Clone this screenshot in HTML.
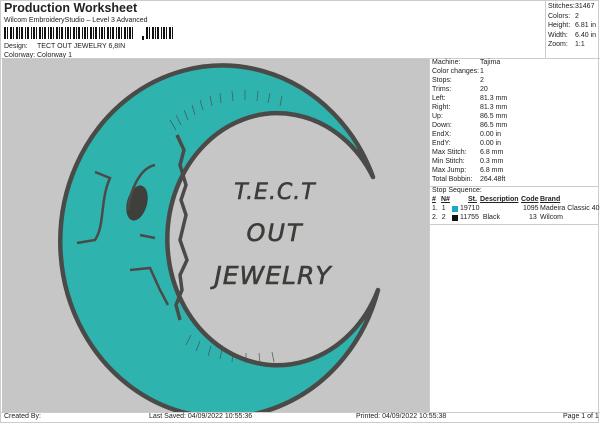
<!DOCTYPE html>
<html><head><style>
body{margin:0;width:600px;height:424px;background:#fff;font-family:"Liberation Sans",sans-serif;color:#222;position:relative;overflow:hidden}
.a{position:absolute;white-space:nowrap;font-size:7px}
.row{position:absolute;left:432px;font-size:7px;white-space:nowrap}
.row b{font-weight:normal;display:inline-block;width:48px}
</style></head><body>
<div style="position:absolute;left:0;top:0;width:599px;height:423px;border:1px solid #ccc;box-sizing:border-box"></div>
<div class="a" style="left:4px;top:1px;font-size:12.5px;font-weight:bold">Production Worksheet</div>
<div class="a" style="left:4px;top:17px">Wilcom EmbroideryStudio – Level 3 Advanced</div>
<svg style="position:absolute;left:4px;top:27px" width="172" height="14">
<g fill="#111">
<rect x="0" y="0" width="2" height="12"/><rect x="3" y="0" width="1" height="12"/><rect x="6" y="0" width="2" height="12"/><rect x="9" y="0" width="1" height="12"/><rect x="12" y="0" width="2" height="12"/><rect x="15" y="0" width="1" height="12"/><rect x="17" y="0" width="2" height="12"/><rect x="21" y="0" width="1" height="12"/><rect x="23" y="0" width="2" height="12"/><rect x="27" y="0" width="1" height="12"/><rect x="29" y="0" width="2" height="12"/><rect x="32" y="0" width="1" height="12"/><rect x="35" y="0" width="2" height="12"/><rect x="38" y="0" width="1" height="12"/><rect x="40" y="0" width="2" height="12"/><rect x="44" y="0" width="1" height="12"/><rect x="46" y="0" width="2" height="12"/><rect x="49" y="0" width="1" height="12"/><rect x="52" y="0" width="2" height="12"/><rect x="55" y="0" width="1" height="12"/><rect x="57" y="0" width="2" height="12"/><rect x="61" y="0" width="1" height="12"/><rect x="63" y="0" width="2" height="12"/><rect x="66" y="0" width="1" height="12"/><rect x="69" y="0" width="2" height="12"/><rect x="72" y="0" width="1" height="12"/><rect x="74" y="0" width="2" height="12"/><rect x="78" y="0" width="1" height="12"/><rect x="80" y="0" width="2" height="12"/><rect x="83" y="0" width="1" height="12"/><rect x="86" y="0" width="2" height="12"/><rect x="89" y="0" width="1" height="12"/><rect x="91" y="0" width="2" height="12"/><rect x="95" y="0" width="1" height="12"/><rect x="97" y="0" width="2" height="12"/><rect x="100" y="0" width="1" height="12"/><rect x="103" y="0" width="2" height="12"/><rect x="106" y="0" width="1" height="12"/><rect x="108" y="0" width="2" height="12"/><rect x="112" y="0" width="1" height="12"/><rect x="114" y="0" width="2" height="12"/><rect x="117" y="0" width="1" height="12"/><rect x="120" y="0" width="2" height="12"/><rect x="123" y="0" width="1" height="12"/><rect x="125" y="0" width="2" height="12"/><rect x="128" y="0" width="1" height="12"/>
<rect x="138" y="9" width="2" height="4"/>
<rect x="142" y="0" width="2" height="12"/><rect x="145" y="0" width="1" height="12"/><rect x="148" y="0" width="2" height="12"/><rect x="151" y="0" width="1" height="12"/><rect x="153" y="0" width="2" height="12"/><rect x="157" y="0" width="1" height="12"/><rect x="159" y="0" width="2" height="12"/><rect x="162" y="0" width="1" height="12"/><rect x="165" y="0" width="2" height="12"/><rect x="168" y="0" width="1" height="12"/>
</g></svg>
<div class="a" style="left:4px;top:43px">Design:</div><div class="a" style="left:37px;top:43px">TECT OUT JEWELRY 6,8IN</div>
<div class="a" style="left:4px;top:52px">Colorway:</div><div class="a" style="left:37px;top:52px">Colorway 1</div>
<div style="position:absolute;left:545px;top:0;width:53px;height:58px;border-left:1px solid #ccc"></div>
<div class="a" style="left:548px;top:2px;line-height:9.5px">Stitches:<br>Colors:<br>Height:<br>Width:<br>Zoom:</div>
<div class="a" style="left:575px;top:2px;line-height:9.5px">31467<br>2<br>6.81 in<br>6.40 in<br>1:1</div>
<div style="position:absolute;left:0;top:58px;width:600px;border-top:1px solid #ccc"></div>
<div style="position:absolute;left:2px;top:59px;width:427px;height:353px;background:#c6c6c6;overflow:hidden">
<svg width="427" height="353" viewBox="2 59 427 353">
<path d="M373,177 A162 176 0 1 0 378,290 A110 126 0 1 1 373,177 Z" fill="#2fb3ae" stroke="#4a4b48" stroke-width="4.5" stroke-linejoin="round"/>
<g stroke="#4a4b48" stroke-width="0.8" opacity="0.8">
<path d="M170,120 l6,10 M176,115 l5,10 M184,110 l4,10 M192,105 l3,10 M200,100 l3,10 M210,96 l2,10 M220,93 l1,10 M232,91 l1,10 M245,90 l0,10 M258,91 l-1,10 M270,93 l-2,10 M282,96 l-2,10"/>
<path d="M186,345 l5,-10 M196,351 l4,-10 M208,356 l3,-10 M220,359 l2,-10 M232,362 l1,-10 M246,363 l0,-10 M260,363 l-1,-10 M274,362 l-2,-10"/>
</g>
<path d="M177,135 L184,150 L180,165 L186,185 L181,200 L186,215 L180,240 L187,260 L180,275 L182,290 L176,305 L180,320" fill="none" stroke="#4a4b48" stroke-width="3.5"/>
<ellipse cx="137" cy="203" rx="10" ry="18" fill="#3f3f3c" transform="rotate(15 137 203)"/>
<path d="M155,165 C140,168 130,190 128,210 M95,172 L110,178 C100,200 105,225 95,240 L77,243 M130,270 L150,268 L160,290 L168,305 M140,235 L155,238" fill="none" stroke="#4a4b48" stroke-width="2.5"/>
<g fill="#3c3c39" font-family="DejaVu Sans,sans-serif" font-style="italic" text-anchor="middle" stroke="#3c3c39" stroke-width="0.6">
<text x="275" y="199" font-size="22" letter-spacing="1">T.E.C.T</text>
<text x="275" y="241" font-size="24" letter-spacing="2">OUT</text>
<text x="273" y="284" font-size="25" letter-spacing="1">JEWELRY</text>
</g>
</svg></div>
<div style="position:absolute;left:429px;top:59px;width:1px;height:353px;background:#ccc"></div>
<div class="row" style="top:58px;line-height:9px"><b>Machine:</b>Tajima<br><b>Color changes:</b>1<br><b>Stops:</b>2<br><b>Trims:</b>20<br><b>Left:</b>81.3 mm<br><b>Right:</b>81.3 mm<br><b>Up:</b>86.5 mm<br><b>Down:</b>86.5 mm<br><b>EndX:</b>0.00 in<br><b>EndY:</b>0.00 in<br><b>Max Stitch:</b>6.8 mm<br><b>Min Stitch:</b>0.3 mm<br><b>Max Jump:</b>6.8 mm<br><b>Total Bobbin:</b>264.48ft</div>
<div style="position:absolute;left:430px;top:186px;width:168px;border-top:1px solid #ccc"></div>
<div class="row" style="top:187px">Stop Sequence:</div>
<div class="a" style="left:432px;top:196px;font-weight:bold;text-decoration:underline">#</div>
<div class="a" style="left:441px;top:196px;font-weight:bold;text-decoration:underline">N#</div>
<div class="a" style="left:468px;top:196px;font-weight:bold;text-decoration:underline">St.</div>
<div class="a" style="left:480px;top:196px;font-weight:bold;text-decoration:underline">Description</div>
<div class="a" style="left:521px;top:196px;font-weight:bold;text-decoration:underline">Code</div>
<div class="a" style="left:540px;top:196px;font-weight:bold;text-decoration:underline">Brand</div>
<div class="a" style="left:432px;top:205px">1.&nbsp;&nbsp;1</div>
<div style="position:absolute;left:452px;top:206px;width:6px;height:6px;background:#1aa9c4"></div>
<div class="a" style="left:460px;top:205px">19710</div>
<div class="a" style="left:523px;top:205px">1095</div>
<div class="a" style="left:540px;top:205px">Madeira Classic 40</div>
<div class="a" style="left:432px;top:214px">2.&nbsp;&nbsp;2</div>
<div style="position:absolute;left:452px;top:215px;width:6px;height:6px;background:#111"></div>
<div class="a" style="left:460px;top:214px">11755&nbsp;&nbsp;Black</div>
<div class="a" style="left:529px;top:214px">13</div>
<div class="a" style="left:540px;top:214px">Wilcom</div>
<div style="position:absolute;left:430px;top:224px;width:168px;border-top:1px solid #ccc"></div>
<div style="position:absolute;left:0;top:412px;width:600px;border-top:1px solid #ccc"></div>
<div class="a" style="left:4px;top:413px">Created By:</div>
<div class="a" style="left:149px;top:413px">Last Saved: 04/09/2022 10:55:36</div>
<div class="a" style="left:356px;top:413px">Printed: 04/09/2022 10:55:38</div>
<div class="a" style="left:563px;top:413px">Page 1 of 1</div>
</body></html>
